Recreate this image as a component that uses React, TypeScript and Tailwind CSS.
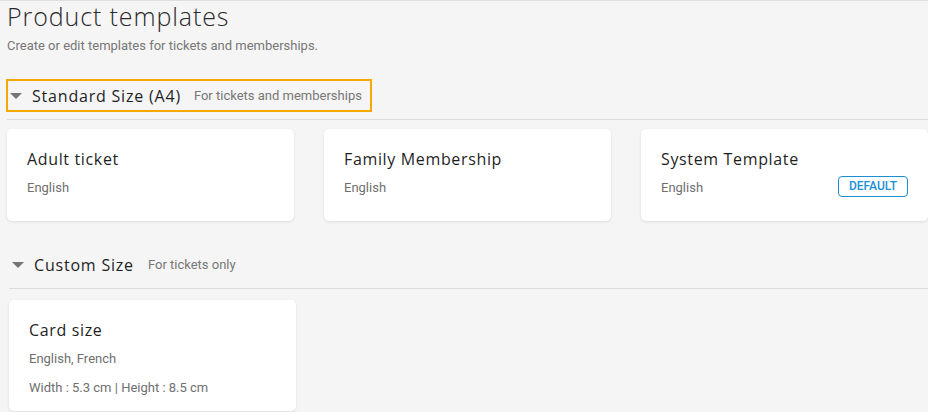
import React from "react";

const HEAD = { fontFamily: '"Open Sans", "Noto Sans", sans-serif' };

function Tri() {
  return (
    <svg width="12" height="6" viewBox="0 0 12 6" className="shrink-0">
      <path d="M0 0 L12 0 L6 6 Z" fill="#757575" />
    </svg>
  );
}

function Card({ title, lines, badge, tall }: { title: string; lines: string[]; badge?: boolean; tall?: boolean }) {
  return (
    <div
      className={`w-[287px] ${tall ? "h-[111px] pt-[20px]" : "h-[92px] pt-[20px]"} bg-white rounded-[5px] shadow-[0_1px_3px_rgba(0,0,0,0.10)] px-[20px]`}
    >
      <div className="text-[16px] leading-[20px] text-[#1f1f1f] tracking-[0.65px]" style={HEAD}>
        {title}
      </div>
      {lines.map((l, i) => (
        <div
          key={i}
          className={`flex items-center justify-between ${i === 0 ? "mt-[11px]" : "mt-[14px]"} h-[15px]`}
        >
          <span className="text-[13px] leading-[15px] text-[#6f6f6f]">{l}</span>
          {badge && i === 0 && (
            <span className="w-[70px] h-[21px] border border-[#1a8fd6] rounded-[4px] text-[#1a8fd6] text-[12px] font-medium flex items-center justify-center -mt-[3px]">
              DEFAULT
            </span>
          )}
        </div>
      ))}
    </div>
  );
}

export default function App() {
  return (
    <div
      className="w-[928px] h-[412px] bg-[#f5f5f5] border-t border-[#dedede] overflow-hidden"
      style={{ fontFamily: 'Roboto, "Liberation Sans", sans-serif' }}
    >
      <h1 className="ml-[7px] text-[25px] leading-[30px] font-light text-[#2a2a2a] tracking-[0.9px]" style={HEAD}>
        Product templates
      </h1>
      <p className="ml-[7px] mt-[7px] text-[13px] leading-[15px] text-[#777]">
        Create or edit templates for tickets and memberships.
      </p>

      <div className="mt-[26px] ml-[6px] w-[366px] h-[33px] border-2 border-[#f5a800] flex items-center pl-[2px]">
        <Tri />
        <span className="ml-[10px] text-[16px] font-medium text-[#1f1f1f] tracking-[0.8px]" style={HEAD}>
          Standard Size (A4)
        </span>
        <span className="ml-[13px] text-[13px] text-[#777]">For tickets and memberships</span>
      </div>
      <div className="mt-[7px] ml-[7px] h-px bg-[#dcdcdc]" />
      <div className="mt-[9px] ml-[7px] flex gap-[30px]">
        <Card title="Adult ticket" lines={["English"]} />
        <Card title="Family Membership" lines={["English"]} />
        <Card title="System Template" lines={["English"]} badge />
      </div>

      <div className="mt-[27px] ml-[12px] h-[33px] flex items-center">
        <Tri />
        <span className="ml-[10px] text-[16px] font-medium text-[#1f1f1f] tracking-[0.8px]" style={HEAD}>
          Custom Size
        </span>
        <span className="ml-[14px] text-[13px] text-[#777]">For tickets only</span>
      </div>
      <div className="mt-[7px] ml-[9px] h-px bg-[#dcdcdc]" />
      <div className="mt-[11px] ml-[9px]">
        <Card title="Card size" lines={["English, French", "Width : 5.3 cm | Height : 8.5 cm"]} tall />
      </div>
    </div>
  );
}
